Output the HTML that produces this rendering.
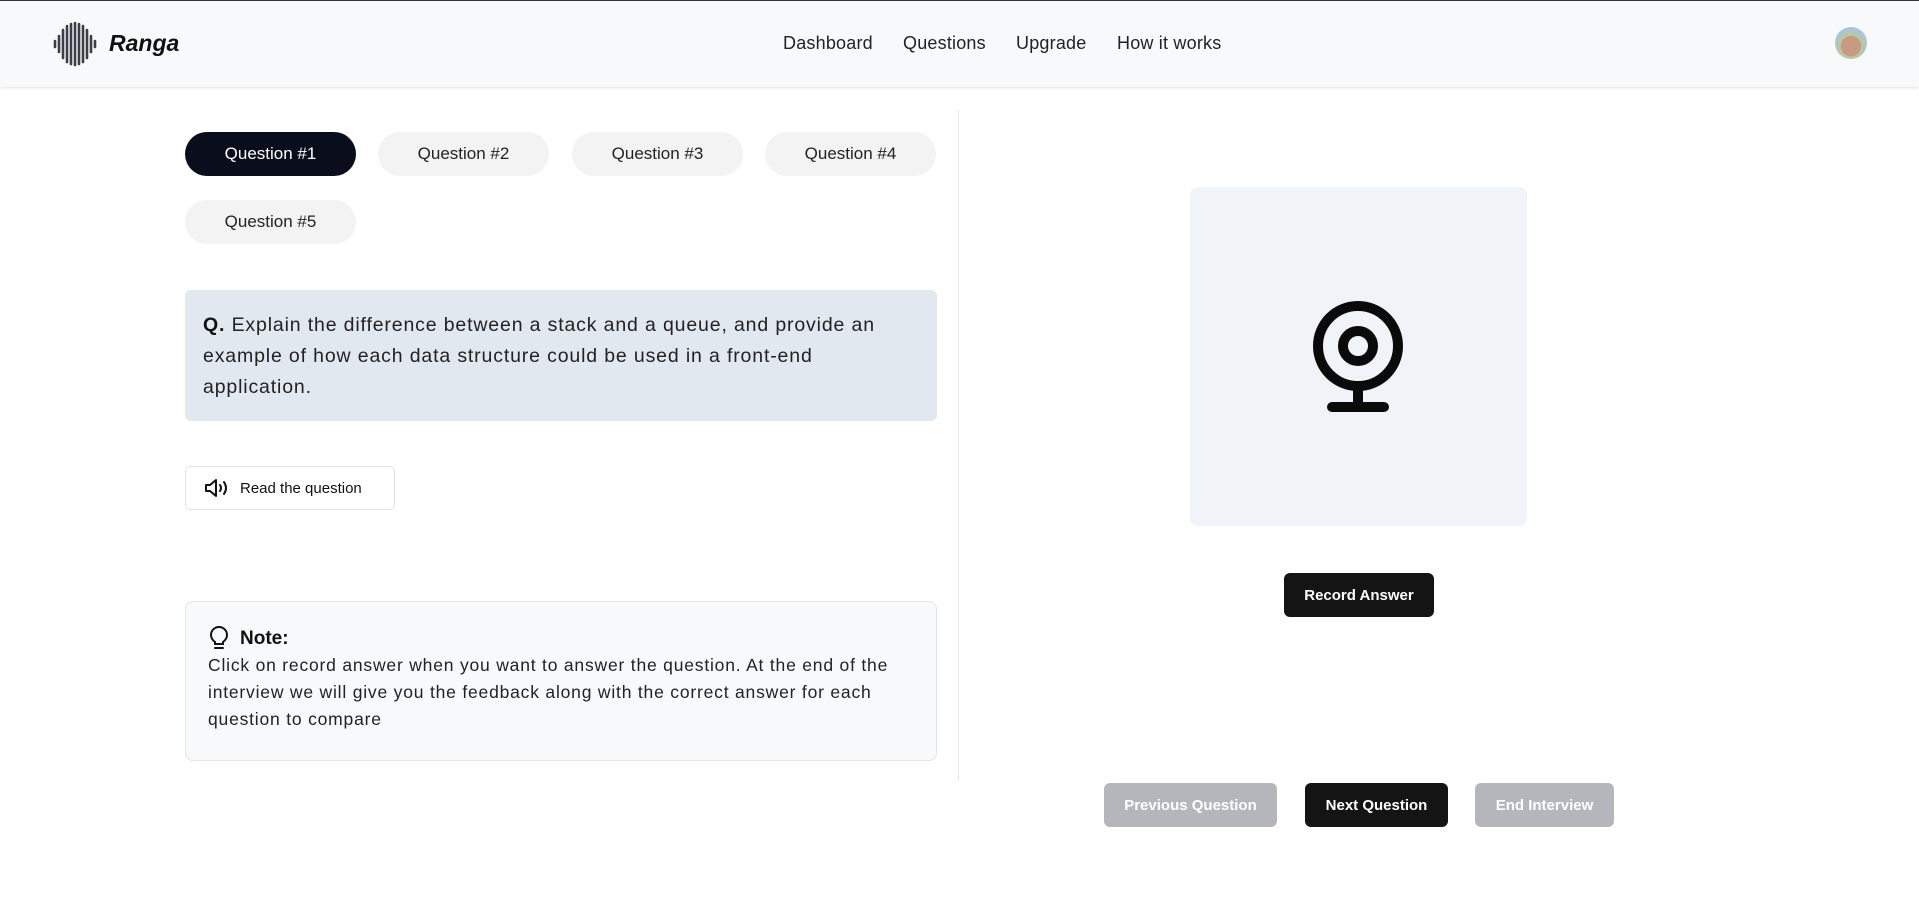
<!DOCTYPE html>
<html><head><meta charset="utf-8"><style>
*{box-sizing:border-box;margin:0;padding:0}
body{width:1919px;height:907px;background:#fff;font-family:"Liberation Sans",sans-serif;color:#111;position:relative;overflow:hidden}
.hdr{position:absolute;left:0;top:0;width:1919px;height:87px;background:#f8f9fb;border-top:1px solid #333;box-shadow:0 1px 3px rgba(0,0,0,.12)}
.abs{position:absolute}
.nav{position:absolute;top:32px;font-size:18px;color:#222;letter-spacing:.2px}
.pill{position:absolute;height:44px;width:171px;border-radius:22px;background:#f3f3f4;font-size:17px;color:#222;display:flex;align-items:center;justify-content:center}
.btn{position:absolute;height:44px;border-radius:6px;color:#fff;font-weight:bold;font-size:15px;display:flex;align-items:center;justify-content:center}
</style></head><body>
<div class="hdr">
<svg class="abs" style="left:53px;top:20px" width="46" height="46" viewBox="0 0 46 46">
<g stroke="#3a3f47" stroke-width="2.6" stroke-linecap="round">
<line x1="2" y1="20" x2="2" y2="26"/><line x1="6" y1="15" x2="6" y2="31"/><line x1="10" y1="9" x2="10" y2="37"/><line x1="14" y1="5" x2="14" y2="41"/><line x1="18" y1="3" x2="18" y2="43"/><line x1="22" y1="2" x2="22" y2="44"/><line x1="26" y1="3" x2="26" y2="43"/><line x1="30" y1="5" x2="30" y2="41"/><line x1="34" y1="9" x2="34" y2="37"/><line x1="38" y1="15" x2="38" y2="31"/><line x1="42" y1="20" x2="42" y2="26"/></g></svg>
<div class="abs" style="left:109px;top:29px;font-size:23px;font-style:italic;font-weight:bold;color:#111">Ranga</div>
<div class="nav" style="left:783px">Dashboard</div>
<div class="nav" style="left:903px">Questions</div>
<div class="nav" style="left:1016px">Upgrade</div>
<div class="nav" style="left:1117px">How it works</div>
<div class="abs" style="left:1835px;top:26px;width:32px;height:32px;border-radius:50%;background:radial-gradient(circle at 50% 60%,#c99a82 0 40%,#b9c99a 42%,#a9c3e0 70%)"></div>
</div>

<div class="pill" style="left:185px;top:132px;background:#0a0d1c;color:#fff">Question #1</div>
<div class="pill" style="left:378px;top:132px">Question #2</div>
<div class="pill" style="left:572px;top:132px">Question #3</div>
<div class="pill" style="left:765px;top:132px">Question #4</div>
<div class="pill" style="left:185px;top:200px">Question #5</div>

<div class="abs" style="left:185px;top:290px;width:752px;height:131px;background:#e2e8f0;border-radius:6px;padding:20px 18px;font-size:19.5px;line-height:31px;color:#222;white-space:nowrap;letter-spacing:.85px"><b style="color:#111">Q.</b> Explain the difference between a stack and a queue, and provide an<br>example of how each data structure could be used in a front-end<br>application.</div>

<div class="abs" style="left:185px;top:466px;width:210px;height:44px;border:1px solid #e3e3e5;border-radius:5px;display:flex;align-items:center;padding-left:18px;font-size:15px;color:#111">
<svg width="28" height="22" viewBox="0 0 28 22" style="margin-right:8px"><g fill="none" stroke="#111" stroke-width="2" stroke-linejoin="round" stroke-linecap="round"><path d="M2 8h4l6-5v16l-6-5H2z"/><path d="M16 8q2 3 0 6"/><path d="M20 5q4 6 0 12"/></g></svg>Read the question</div>

<div class="abs" style="left:185px;top:601px;width:752px;height:160px;border:1px solid #e3e4e7;border-radius:8px;background:#f8f9fa;padding:24px 22px;font-size:17.5px;line-height:27px;color:#222;white-space:nowrap;letter-spacing:.8px">
<div style="display:flex;align-items:center;font-size:19px;font-weight:bold;color:#111;line-height:24px;letter-spacing:0"><svg width="22" height="26" viewBox="0 0 22 26" style="margin-right:10px"><g fill="none" stroke="#111" stroke-width="2" stroke-linecap="round"><path d="M7 16q-4-3-4-7a8 8 0 0 1 16 0q0 4-4 7v2H7z"/><line x1="7" y1="22" x2="15" y2="22"/></g></svg>Note:</div>
Click on record answer when you want to answer the question. At the end of the<br>interview we will give you the feedback along with the correct answer for each<br>question to compare</div>

<div class="abs" style="left:958px;top:110px;width:1px;height:671px;background:#e8e8ea"></div>

<div class="abs" style="left:1190px;top:187px;width:337px;height:339px;background:#f0f3f8;border-radius:8px"></div>
<svg class="abs" style="left:1300px;top:290px" width="120" height="130" viewBox="1300 290 120 130"><g fill="none" stroke="#0a0a0a" stroke-width="10" stroke-linecap="round"><circle cx="1358" cy="346" r="40"/><circle cx="1358" cy="346" r="15"/><line x1="1358" y1="386" x2="1358" y2="407"/><line x1="1332" y1="407" x2="1384" y2="407"/></g></svg>

<div class="btn" style="left:1284px;top:573px;width:150px;background:#141414">Record Answer</div>
<div class="btn" style="left:1104px;top:783px;width:173px;background:#b4b6bc">Previous Question</div>
<div class="btn" style="left:1305px;top:783px;width:143px;background:#141414">Next Question</div>
<div class="btn" style="left:1475px;top:783px;width:139px;background:#b4b6bc">End Interview</div>
</body></html>
